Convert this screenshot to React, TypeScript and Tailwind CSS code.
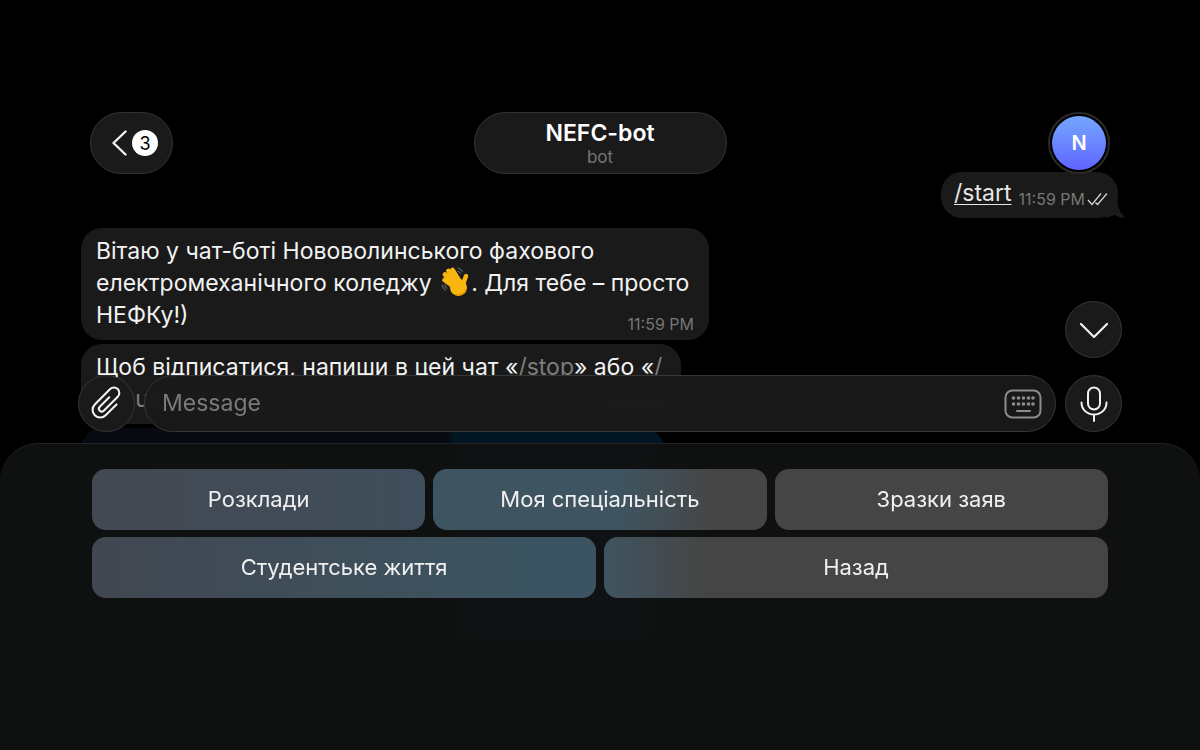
import React from "react";

const font = { fontFamily: "Inter, 'Liberation Sans', sans-serif" };

function WaveHand() {
  return (
    <svg width="30" height="32" viewBox="0 0 30 32" className="inline-block align-[1px] ml-[3px] -my-2">
      <path d="M1 19c.6 2.200 1.800 4 3.400 5.400M3.500 18.500c.5 1.500 1.300 2.800 2.400 3.800" stroke="#5f6368" strokeWidth="1.200" fill="none" strokeLinecap="round" />
      <path d="M17 2c2 .6 3.500 1.800 4.500 3.500M16.500 5c1.300.4 2.300 1.200 3 2.300" stroke="#5f6368" strokeWidth="1.200" fill="none" strokeLinecap="round" />
      <g stroke="#f8b60f" strokeLinecap="round" fill="none">
        <path d="M3.500 14 13 21" strokeWidth="4.600" />
        <path d="M4 8.500 14 19" strokeWidth="4.800" />
        <path d="M7.500 5 16 17" strokeWidth="4.800" />
        <path d="M11.500 4 19 16" strokeWidth="4.600" />
        <path d="M25 10 21.500 20" strokeWidth="4.400" />
      </g>
      <circle cx="17.500" cy="21.500" r="8.500" fill="#f8b60f" />
      <path d="M11 26.500c2 2.500 5.500 3.700 9 2.500 3-1 5.500-4 5.500-7.500-1.500 4-5.500 7-9.500 6.500-2 0-3.600-.5-5-1.500Z" fill="#e89a06" />
    </svg>
  );
}

function RoundButton({ children }: { children: React.ReactNode }) {
  return (
    <div className="w-[57px] h-[57px] shrink-0 rounded-full bg-[#1a1a1a] border border-[#363636] flex items-center justify-center">
      {children}
    </div>
  );
}

function KeyButton({ label, className }: { label: string; className: string }) {
  return (
    <div className={"flex-1 h-[61px] rounded-[14px] flex items-center justify-center text-[22px] text-[#f0f0f0] " + className}>
      {label}
    </div>
  );
}

export default function App() {
  return (
    <div style={font} className="relative w-[1200px] h-[750px] overflow-hidden bg-black text-[#f2f2f2]">
      <header className="relative z-10 pt-[112px] px-[90px] grid grid-cols-3 items-start">
        <div className="justify-self-start w-[83px] h-[62px] rounded-full bg-[#1a1a1a] border border-[#333333] flex items-center pl-[20px] gap-[5px]">
          <svg width="16" height="26" viewBox="0 0 16 26">
            <path d="M14.500 1.500 2.500 13l12 11.500" stroke="#f2f2f2" strokeWidth="2.400" fill="none" strokeLinecap="round" strokeLinejoin="round" />
          </svg>
          <div className="w-[26px] h-[26px] rounded-full bg-white text-black text-[18px] flex items-center justify-center">3</div>
        </div>
        <div className="justify-self-center w-[253px] h-[62px] rounded-full bg-[#1a1a1a] border border-[#333333] flex flex-col items-center justify-center">
          <div className="text-[23px] leading-[28px] font-semibold text-white">NEFC-bot</div>
          <div className="text-[17px] leading-[20px] text-[#757575]">bot</div>
        </div>
        <div className="justify-self-end w-[62px] h-[62px] rounded-full bg-black border-2 border-[#2a2a2a] flex items-center justify-center">
          <div className="w-[54px] h-[54px] rounded-full bg-gradient-to-b from-[#76a6ff] to-[#6063ff] text-white text-[20px] font-semibold flex items-center justify-center">N</div>
        </div>
      </header>

      <main className="flex flex-col">
        <div className="relative self-end mr-[82px] -mt-[2px] w-[177px] h-[46px] rounded-[21px] bg-[#1a1a1a] pl-[13px] flex items-center">
          <span className="text-[23px] underline underline-offset-[3px] decoration-[1px] -mt-[3px] text-[#e6e6e6]">/start</span>
          <span className="ml-[7px] mt-[7px] text-[16px] text-[#767676]">11:59 PM</span>
          <svg width="22" height="14" viewBox="0 0 22 14" className="ml-[2px] mt-[7px] shrink-0">
            <path d="M1 8l4 4.500L14 1.500M8.500 10.500l2 2L20 1.500" stroke="#d8d8d8" strokeWidth="1.200" fill="none" />
          </svg>
          <svg width="20" height="16" viewBox="0 0 20 16" className="absolute -right-[7px] bottom-0">
            <path d="M0 0H12.500c.5 6 3 11 7 15 .3.300 0 .8-.3.8-3.800 0-6.700-.8-9-2.800L0 16Z" fill="#1a1a1a" />
          </svg>
        </div>

        <div className="relative ml-[81px] mt-[10px] w-[628px] h-[112px] rounded-[21px] bg-[#1a1a1a] pl-[15px] pt-[7px] text-[23px] leading-[32px]">
          <div>Вітаю у чат-боті Нововолинського фахового</div>
          <div className="h-[32px]">електромеханічного коледжу <WaveHand />. Для тебе – просто</div>
          <div>НЕФКу!)</div>
          <span className="absolute right-[15px] bottom-[7px] text-[16px] leading-[18px] text-[#767676]">11:59 PM</span>
        </div>

        <div className="relative ml-[81px] mt-[4px] w-[600px] h-[80px] rounded-[21px] bg-[#1a1a1a] pl-[15px] pt-[7px] text-[23px] leading-[32px]">
          <div>Щоб відписатися, напиши в цей чат «<span className="text-[#7d7d7d]">/stop</span>» або «<span className="text-[#7d7d7d]">/</span></div>
          <div className="text-[#7d7d7d]">unsubscribe</div>
          <span className="absolute right-[15px] bottom-[7px] text-[16px] leading-[18px] text-[#767676]">11:59 PM</span>
        </div>

        <div className="ml-[81px] mt-[4px] w-[583px] h-[224px] rounded-[21px] bg-gradient-to-r from-[#070b0f] from-[63%] to-[#021624] to-[64%]" />
      </main>

      <section className="absolute z-20 left-[78px] right-[78px] top-[301px] flex flex-col">
        <div className="self-end">
          <RoundButton>
            <svg width="30" height="18" viewBox="0 0 30 18">
              <path d="M2 3l13 13L28 3" stroke="#f2f2f2" strokeWidth="2.200" fill="none" strokeLinecap="round" strokeLinejoin="round" />
            </svg>
          </RoundButton>
        </div>
        <div className="mt-[17px] flex items-center gap-[9px]">
          <RoundButton>
            <svg width="44" height="46" viewBox="0 0 34 36">
              <g transform="rotate(45 17 18)">
                <path d="M22.500 13v12a6 6 0 0 1-12 0V8a4.200 4.200 0 0 1 8.400 0v15.500a2.200 2.200 0 0 1-4.400 0V13" stroke="#f2f2f2" strokeWidth="1.600" fill="none" strokeLinecap="round" />
              </g>
            </svg>
          </RoundButton>
          <div className="flex-1 h-[57px] rounded-full bg-[#191919]/95 backdrop-blur-sm border border-[#363636] pl-[17px] pr-[13px] flex items-center justify-between">
            <span className="text-[23px] text-[#7a7a7a]">Message</span>
            <svg width="38" height="30" viewBox="0 0 38 30">
              <rect x="1.500" y="1.500" width="35" height="27" rx="7" stroke="#8c8c8c" strokeWidth="2" fill="none" />
              <g fill="#8c8c8c">
                <circle cx="9.500" cy="9" r="1.800" /><circle cx="14.500" cy="9" r="1.800" /><circle cx="19.500" cy="9" r="1.800" /><circle cx="24.500" cy="9" r="1.800" /><circle cx="29" cy="9" r="1.800" />
                <circle cx="9.500" cy="15" r="1.800" /><circle cx="14.500" cy="15" r="1.800" /><circle cx="19.500" cy="15" r="1.800" /><circle cx="24.500" cy="15" r="1.800" /><circle cx="29" cy="15" r="1.800" />
                <rect x="12" y="21" width="15" height="2" rx="1" />
              </g>
            </svg>
          </div>
          <RoundButton>
            <svg width="28" height="36" viewBox="0 0 28 36">
              <rect x="8" y="1.500" width="12" height="22" rx="6" stroke="#f2f2f2" strokeWidth="2" fill="none" />
              <path d="M1.500 16.500c0 7 5.500 12 12.500 12s12.500-5 12.500-12M14 28.500V35" stroke="#f2f2f2" strokeWidth="2" fill="none" strokeLinecap="round" />
            </svg>
          </RoundButton>
        </div>
      </section>

      <section className="absolute z-10 inset-x-0 top-[443px] bottom-0 rounded-t-[38px] bg-[#101212]/[0.97] backdrop-blur-md border-t border-[#222525] px-[92px] pt-[25px] flex flex-col gap-[7px]">
        <div className="flex gap-[8px]">
          <KeyButton label="Розклади" className="bg-gradient-to-r from-[#434852] to-[#3f4e5b]" />
          <KeyButton label="Моя спеціальність" className="bg-gradient-to-r from-[#3e5461] from-55% to-[#454545] to-85%" />
          <KeyButton label="Зразки заяв" className="bg-[#454545]" />
        </div>
        <div className="flex gap-[8px]">
          <KeyButton label="Студентське життя" className="bg-gradient-to-r from-[#414751] to-[#3c5461] to-85%" />
          <KeyButton label="Назад" className="bg-gradient-to-r from-[#3f5461] to-[#454545] to-20%" />
        </div>
      </section>
    </div>
  );
}
